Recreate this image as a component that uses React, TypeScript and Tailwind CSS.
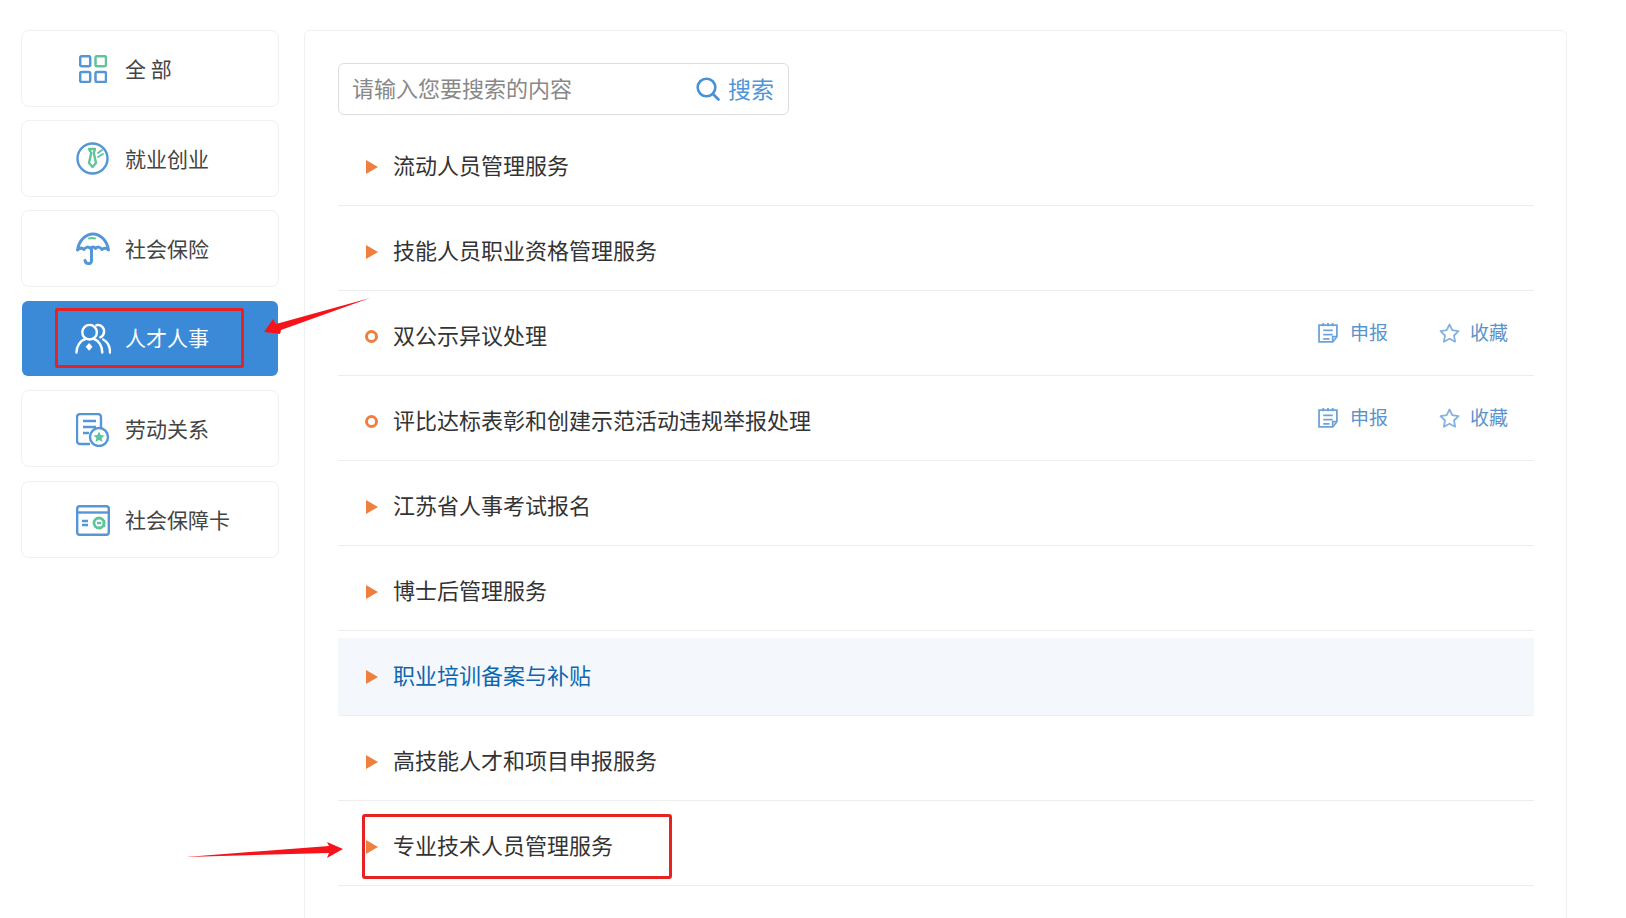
const blue = "#5596d6";
const green = "#5ec59b";

function AllIcon() {
  return (
    <svg width="28" height="28" viewBox="0 0 28 28" fill="none" strokeWidth="2.5">
      <rect x="1.200" y="1.200" width="10" height="10" rx="1.500" stroke={blue} />
      <rect x="16.500" y="1.200" width="10.500" height="10" rx="1.500" stroke={green} />
      <rect x="1.200" y="17" width="10" height="10" rx="1.500" stroke={blue} />
      <rect x="16.500" y="17" width="10.500" height="10" rx="1.500" stroke={blue} />
    </svg>
  );
}

function JobIcon() {
  return (
    <svg width="33" height="33" viewBox="0 0 33 33" fill="none" strokeWidth="2.400">
      <circle cx="16.500" cy="16.500" r="15" stroke={blue} />
      <path d="M13 7h6l-1.200 4 2.200 10-3.500 4-3.500-4 2.200-10z" stroke={green} strokeLinejoin="round" />
      <path d="M22 11l4-3M22 15l5-3" stroke={green} strokeLinecap="round" strokeWidth="1.800" />
    </svg>
  );
}

function UmbrellaIcon() {
  return (
    <svg width="34" height="34" viewBox="0 0 34 34" fill="none" strokeWidth="3" strokeLinecap="round" strokeLinejoin="round">
      <path d="M1.500 18C3 8 10 2 17 2s14 6 15.500 16c-2-2-4.500-2.500-6.500-.5-2-3-4.500-3-6.500-1-1.500-2-3.500-2-5 0-2-2-4.500-2-6.500 1-2-2-4.500-1.500-6.500.5z" stroke={blue} />
      <path d="M15.500 17v12c0 3.500-6 3.500-6.500-.5" stroke={blue} />
      <path d="M13 6.500c2-.8 4-.8 6 0" stroke={green} strokeWidth="2" />
    </svg>
  );
}

function PeopleIcon() {
  return (
    <svg width="37" height="32" viewBox="0 0 37 32" fill="none" stroke="#fff" strokeWidth="2.500" strokeLinecap="round">
      <circle cx="15" cy="9" r="7.500" />
      <path d="M22 1.800c5-1 8.500 3 7.800 7.500-.4 2.500-2 4.200-3.800 5" />
      <path d="M1.500 30c0-7 4-12.500 9-14M28 30c0-7-3.500-12.500-8.500-14" />
      <path d="M36 30c0-6-2.500-11-7-13.500" />
      <path d="M14.500 20l3.500 4-3.500 4-3.500-4z" fill="#fff" stroke="none" />
    </svg>
  );
}

function RelationIcon() {
  return (
    <svg width="34" height="34" viewBox="0 0 34 34" fill="none" strokeWidth="2.400">
      <path d="M14 31H4a3 3 0 0 1-3-3V4a3 3 0 0 1 3-3h18a3 3 0 0 1 3 3v11" stroke={blue} />
      <path d="M7 8h13M7 14h13M7 20h6" stroke={blue} />
      <circle cx="23" cy="24" r="9" stroke={blue} fill="#fff" />
      <path d="M23 18.500l1.700 3.500 3.800.5-2.800 2.600.7 3.800-3.400-1.800-3.400 1.800.7-3.800-2.800-2.600 3.800-.5z" fill={green} />
    </svg>
  );
}

function CardIcon() {
  return (
    <svg width="34" height="31" viewBox="0 0 34 31" fill="none" strokeWidth="2.400">
      <rect x="1.200" y="1.200" width="31.600" height="28.600" rx="2.500" stroke={blue} />
      <path d="M1 7.500h32" stroke={blue} />
      <path d="M6 16h6M6 20h6" stroke={blue} />
      <circle cx="23" cy="18" r="5" stroke={green} strokeWidth="2.800" />
      <path d="M21 18h4M28 15v7" stroke={green} />
    </svg>
  );
}

function ApplyIcon() {
  return (
    <svg width="21" height="21" viewBox="0 0 20 20" fill="none" stroke="#6fa3d8" strokeWidth="1.700">
      <path d="M1 3h17v11l-4 5H1z" />
      <path d="M5 1v3M9.500 1v3M14 1v3M5 8h9M5 12h9M5 16h6" />
      <path d="M18 14h-4v5" />
    </svg>
  );
}

function StarIcon() {
  return (
    <svg width="21" height="20" viewBox="0 0 21 20" fill="none" stroke="#86b2e0" strokeWidth="1.800" strokeLinejoin="round">
      <path d="M10.500 1.500l2.800 5.700 6.200.9-4.500 4.400 1.100 6.200-5.600-3-5.600 3 1.100-6.200L1.500 8.100l6.200-.9z" />
    </svg>
  );
}

function SearchIcon() {
  return (
    <svg width="24" height="24" viewBox="0 0 24 24" fill="none" stroke="#4a90d4" strokeWidth="2.600" strokeLinecap="round">
      <circle cx="10.500" cy="10.500" r="8.800" />
      <path d="M17 17l5.500 5.500" />
    </svg>
  );
}

const categories = [
  { label: "全 部", icon: <AllIcon />, left: "pl-[3px]" },
  { label: "就业创业", icon: <JobIcon />, left: "pl-0" },
  { label: "社会保险", icon: <UmbrellaIcon />, left: "pl-0" },
  { label: "人才人事", icon: <PeopleIcon />, left: "pl-0", active: true },
  { label: "劳动关系", icon: <RelationIcon />, left: "pt-[3px]" },
  { label: "社会保障卡", icon: <CardIcon />, left: "pt-[2px]", last: true },
];

const rows = [
  { title: "流动人员管理服务" },
  { title: "技能人员职业资格管理服务" },
  { title: "双公示异议处理", leaf: true },
  { title: "评比达标表彰和创建示范活动违规举报处理", leaf: true },
  { title: "江苏省人事考试报名" },
  { title: "博士后管理服务" },
  { title: "职业培训备案与补贴", hover: true },
  { title: "高技能人才和项目申报服务" },
  { title: "专业技术人员管理服务" },
];

export default function App() {
  return (
    <div className="relative h-[918px] overflow-hidden bg-white font-['Noto_Sans_CJK_SC','Liberation_Sans',sans-serif]">
      <div className="flex items-start pl-[21px] pt-[30px]">
        <aside className="flex w-[258px] flex-col gap-[13px]">
          {categories.map((c) => (
            <div
              key={c.label}
              className={
                c.active
                  ? "mx-px my-px flex h-[75px] items-center rounded-md bg-[#3a8ad8] pl-[53px] text-white"
                  : "flex h-[77px] items-center rounded-lg border border-[#f0f0f0] pl-[54px] text-[#444] " + (c.last ? "mt-px" : "")
              }
            >
              <div className={"flex w-[36px] shrink-0 items-center " + c.left}>{c.icon}</div>
              <span className={"text-[21px] leading-none " + (c.active ? "ml-[14px] pb-[2px]" : "ml-[13px]")}>{c.label}</span>
            </div>
          ))}
        </aside>

        <main className="ml-[25px] h-[900px] w-[1263px] rounded-t-md border border-[#f0f0f0] pl-[33px] pr-[32px] pt-[32px]">
          <div className="flex h-[52px] w-[451px] items-center rounded-md border border-[#dddddd] pl-[13px] pr-[14px]">
            <input
              className="min-w-0 flex-1 bg-transparent pb-[3px] text-[22px] text-[#333] outline-none placeholder:text-[#888]"
              placeholder="请输入您要搜索的内容"
            />
            <SearchIcon />
            <span className="ml-[8px] pb-[2px] text-[23px] text-[#4f95d8]">搜索</span>
          </div>

          <ul className="mt-[13px]">
            {rows.map((r) => (
              <li
                key={r.title}
                className={
                  "mb-[7px] flex h-[78px] items-center border-b border-[#eeeeee] pl-[28px] pr-[26px] " +
                  (r.hover ? "bg-[#f4f8fc]" : "")
                }
              >
                <div className="flex w-[27px] shrink-0 items-center">
                  {r.leaf ? (
                    <span className="-ml-px h-[13px] w-[13px] rounded-full border-[3px] border-[#ee7f3f]" />
                  ) : (
                    <span className="h-0 w-0 border-y-[7px] border-l-[12px] border-y-transparent border-l-[#ee7f3f]" />
                  )}
                </div>
                <span className={"pb-[4px] text-[22px] " + (r.hover ? "text-[#0f66b0]" : "text-[#333]")}>{r.title}</span>
                {r.leaf && (
                  <div className="mb-2 ml-auto flex items-center text-[19px] text-[#5b93cc]">
                    <ApplyIcon />
                    <span className="ml-[11px]">申报</span>
                    <span className="ml-[51px]" />
                    <StarIcon />
                    <span className="ml-[10px]">收藏</span>
                  </div>
                )}
              </li>
            ))}
          </ul>
        </main>
      </div>

      {/* hand-drawn annotations on top of the screenshot */}
      <div className="absolute left-[55px] top-[308px] h-[60px] w-[189px] rounded-[2px] border-[3px] border-[#e62222]" />
      <div className="absolute left-[362px] top-[814px] h-[65px] w-[310px] rounded-[3px] border-[3px] border-[#e62222]" />
      <svg className="pointer-events-none absolute left-0 top-0" width="1626" height="918">
        <polygon points="264,332 273,319 276,324 370,298 281,330 280,334" fill="#f4141a" />
        <polygon points="343,849 327,842 329,846 186,857 329,853 327,858" fill="#f4141a" />
      </svg>
    </div>
  );
}
